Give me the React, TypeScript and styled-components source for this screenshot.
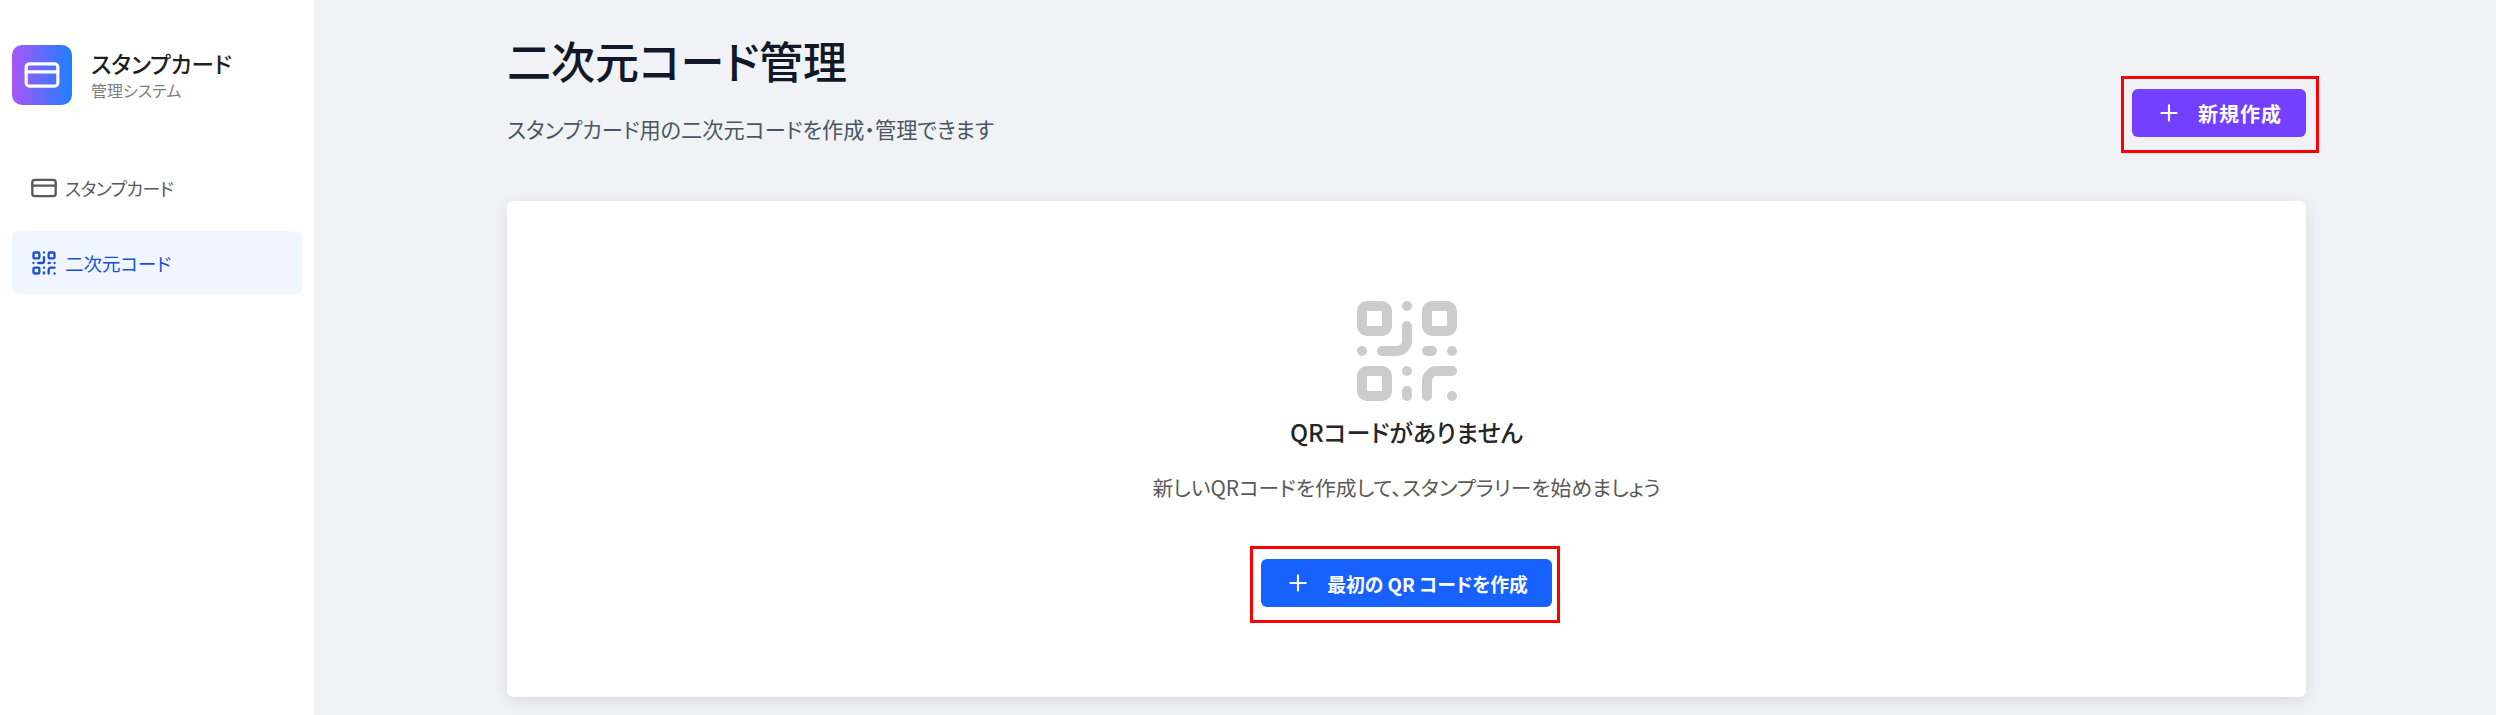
import React from "react";
import styled, { createGlobalStyle } from "styled-components";
import { CreditCard, QrCode, Plus } from "lucide-react";

const Global = createGlobalStyle`
  html, body { margin: 0; padding: 0; height: 100%; background: #f0f2f5; overflow: hidden; }
  body { font-family: "Noto Sans CJK JP", "Noto Sans", sans-serif; font-feature-settings: "palt"; }
  * { box-sizing: border-box; }
`;

const Shell = styled.div`
  display: flex;
  width: 2496px;
  height: 715px;
`;

const Sidebar = styled.aside`
  width: 314px;
  flex: none;
  background: #fff;
  padding: 45px 12px 0;
`;

const Brand = styled.div`
  display: flex;
  align-items: center;
  gap: 19px;
  margin-bottom: 51px;
`;

const Logo = styled.div`
  width: 60px;
  height: 60px;
  border-radius: 10px;
  display: flex;
  align-items: center;
  justify-content: center;
  color: #fff;
  background: linear-gradient(90deg, #a855f7, #1e80ff);
`;

const BrandText = styled.div`
  display: flex;
  flex-direction: column;
  padding-bottom: 4px;
`;

const BrandName = styled.div`
  font-size: 22.5px;
  line-height: 34px;
  font-weight: 500;
  color: #1f1f1f;
`;

const BrandSub = styled.div`
  font-size: 16px;
  line-height: 20px;
  color: #808080;
`;

const Nav = styled.nav`
  display: flex;
  flex-direction: column;
  gap: 12px;
`;

const NavItem = styled.div<{ $active?: boolean }>`
  height: 63px;
  display: flex;
  align-items: center;
  gap: 7px;
  padding-left: 18px;
  border-radius: 6px;
  font-size: ${(p) => (p.$active ? "18.5px" : "18px")};
  letter-spacing: ${(p) => (p.$active ? "0" : "-0.6px")};
  color: ${(p) => (p.$active ? "#1d4ed8" : "#595959")};
  background: ${(p) => (p.$active ? "#eff6ff" : "transparent")};
`;

const Main = styled.main`
  flex: 1;
  padding: 25px 190px 0 193px;
`;

const Header = styled.header`
  display: flex;
  justify-content: space-between;
  align-items: flex-start;
  margin-bottom: 58px;
`;

const HeaderText = styled.div`
  display: flex;
  flex-direction: column;
`;

const Title = styled.h1`
  margin: 0;
  font-size: 44px;
  line-height: 70px;
  font-weight: 500;
  color: #111827;
`;

const Subtitle = styled.p`
  margin: 20px 0 0;
  font-size: 21.2px;
  line-height: 28px;
  color: #4b5563;
`;

const Marked = styled.div<{ $right: number }>`
  position: relative;
  display: inline-flex;
  &::after {
    content: "";
    position: absolute;
    top: -13px;
    bottom: -16px;
    left: -11px;
    right: ${(p) => -p.$right}px;
    border: 3px solid #f00;
    pointer-events: none;
  }
`;

const Action = styled.button<{ $tone: string; $spaced?: boolean }>`
  height: 48px;
  border: 0;
  border-radius: 6px;
  padding: 0 24px;
  display: inline-flex;
  align-items: center;
  gap: 16px;
  color: #fff;
  font: inherit;
  font-size: ${(p) => (p.$spaced ? "20px" : "18.8px")};
  letter-spacing: ${(p) => (p.$spaced ? "1px" : "0")};
  font-weight: 700;
  background: ${(p) => p.$tone};
`;

const HeaderAction = styled.div`
  margin-top: 64px;
`;

const Card = styled.section`
  height: 496px;
  background: #fff;
  border-radius: 6px;
  box-shadow: 0 4px 16px rgba(0, 0, 0, 0.1);
  display: flex;
  flex-direction: column;
  align-items: center;
  padding-top: 90px;
`;

const EmptyIcon = styled.div`
  color: #ccc;
  height: 120px;
  display: flex;
`;

const EmptyTitle = styled.h2`
  margin: 4px 0 0;
  font-size: 24px;
  line-height: 34px;
  font-weight: 500;
  color: #262626;
`;

const EmptyText = styled.p`
  margin: 24px 0 58px;
  font-size: 20.8px;
  line-height: 28px;
  color: #595959;
`;

export default function App() {
  return (
    <Shell>
      <Global />
      <Sidebar>
        <Brand>
          <Logo>
            <CreditCard size={38} strokeWidth={2} />
          </Logo>
          <BrandText>
            <BrandName>スタンプカード</BrandName>
            <BrandSub>管理システム</BrandSub>
          </BrandText>
        </Brand>
        <Nav>
          <NavItem>
            <CreditCard size={28} strokeWidth={2} />
            スタンプカード
          </NavItem>
          <NavItem $active>
            <QrCode size={28} strokeWidth={2} />
            二次元コード
          </NavItem>
        </Nav>
      </Sidebar>
      <Main>
        <Header>
          <HeaderText>
            <Title>二次元コード管理</Title>
            <Subtitle>スタンプカード用の二次元コードを作成・管理できます</Subtitle>
          </HeaderText>
          <HeaderAction>
            <Marked $right={13}>
              <Action $tone="#7340ff" $spaced>
                <Plus size={26} strokeWidth={2} />
                新規作成
              </Action>
            </Marked>
          </HeaderAction>
        </Header>
        <Card>
          <EmptyIcon>
            <QrCode size={120} strokeWidth={2} />
          </EmptyIcon>
          <EmptyTitle>QRコードがありません</EmptyTitle>
          <EmptyText>新しいQRコードを作成して、スタンプラリーを始めましょう</EmptyText>
          <Marked $right={8}>
            <Action $tone="#1661ff">
              <Plus size={26} strokeWidth={2} />
              最初の QR コードを作成
            </Action>
          </Marked>
        </Card>
      </Main>
    </Shell>
  );
}
